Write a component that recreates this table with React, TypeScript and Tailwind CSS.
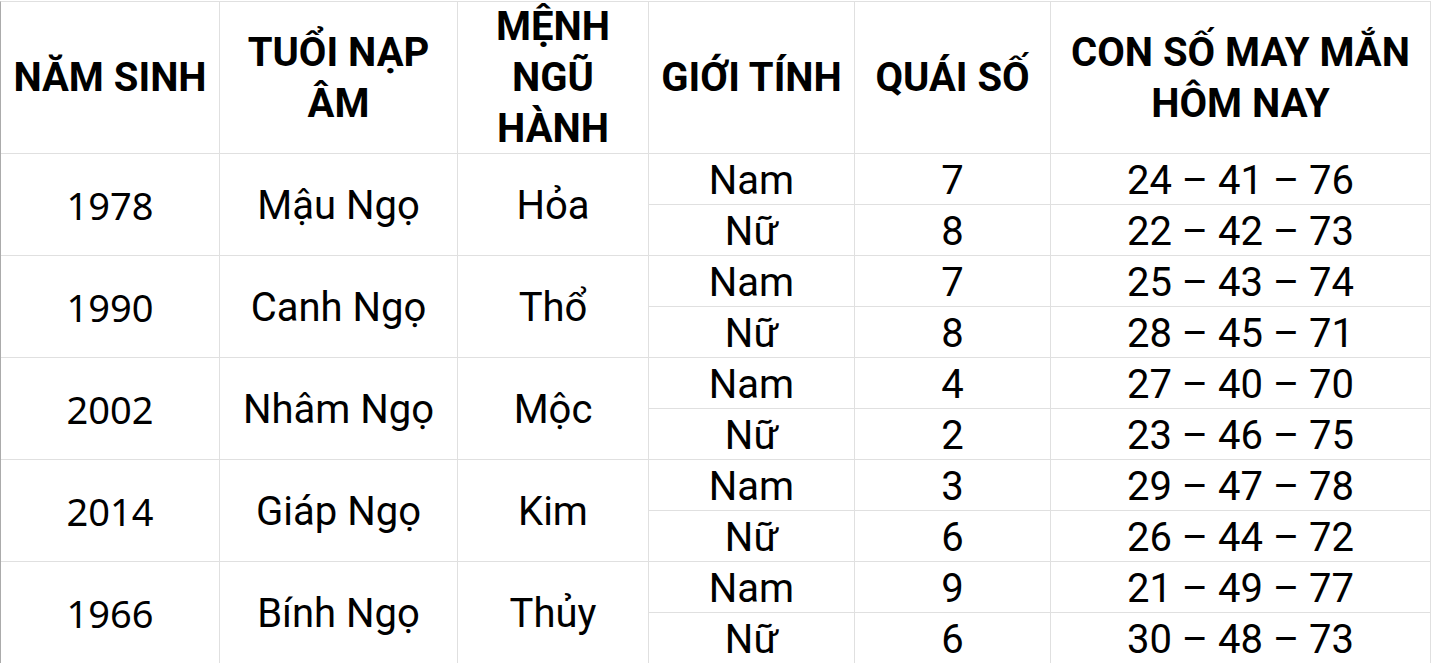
import React from "react";

const ROWS = [
  { year: "1978", tuoi: "Mậu Ngọ", menh: "Hỏa", nam: ["7", "24 – 41 – 76"], nu: ["8", "22 – 42 – 73"] },
  { year: "1990", tuoi: "Canh Ngọ", menh: "Thổ", nam: ["7", "25 – 43 – 74"], nu: ["8", "28 – 45 – 71"] },
  { year: "2002", tuoi: "Nhâm Ngọ", menh: "Mộc", nam: ["4", "27 – 40 – 70"], nu: ["2", "23 – 46 – 75"] },
  { year: "2014", tuoi: "Giáp Ngọ", menh: "Kim", nam: ["3", "29 – 47 – 78"], nu: ["6", "26 – 44 – 72"] },
  { year: "1966", tuoi: "Bính Ngọ", menh: "Thủy", nam: ["9", "21 – 49 – 77"], nu: ["6", "30 – 48 – 73"] },
];

const HEAD = ["NĂM SINH", "TUỔI NẠP ÂM", "MỆNH NGŨ HÀNH", "GIỚI TÍNH", "QUÁI SỐ", "CON SỐ MAY MẮN HÔM NAY"];

const cell = "bg-white flex items-center justify-center text-center text-black";
const body = "font-['Roboto',sans-serif] text-[40px] leading-[44px] pt-[3px]";

export default function App() {
  return (
    <div className="bg-white w-[1432px] h-[663px] overflow-hidden pt-px">
      <div className="w-[1431px] border-t border-r border-[#e0e0e0] border-l border-l-[#ababab] bg-[#e0e0e0] grid grid-cols-[218px_237px_190px_205px_195px_379px] grid-rows-[151px_repeat(10,50px)] gap-px">
        {HEAD.map((h) => (
          <div
            key={h}
            className={`${cell} font-['Roboto',sans-serif] font-bold text-[40px] leading-[51px] px-2`}
          >
            {h}
          </div>
        ))}
        {ROWS.map((r) => (
          <React.Fragment key={r.year}>
            <div className={`${cell} row-span-2 font-['Noto_Sans',sans-serif] text-[38px] leading-[44px] pt-px`}>{r.year}</div>
            <div className={`${cell} row-span-2 ${body}`}>{r.tuoi}</div>
            <div className={`${cell} row-span-2 ${body}`}>{r.menh}</div>
            <div className={`${cell} ${body}`}>Nam</div>
            <div className={`${cell} ${body}`}>{r.nam[0]}</div>
            <div className={`${cell} ${body}`}>{r.nam[1]}</div>
            <div className={`${cell} ${body}`}>Nữ</div>
            <div className={`${cell} ${body}`}>{r.nu[0]}</div>
            <div className={`${cell} ${body}`}>{r.nu[1]}</div>
          </React.Fragment>
        ))}
      </div>
    </div>
  );
}
